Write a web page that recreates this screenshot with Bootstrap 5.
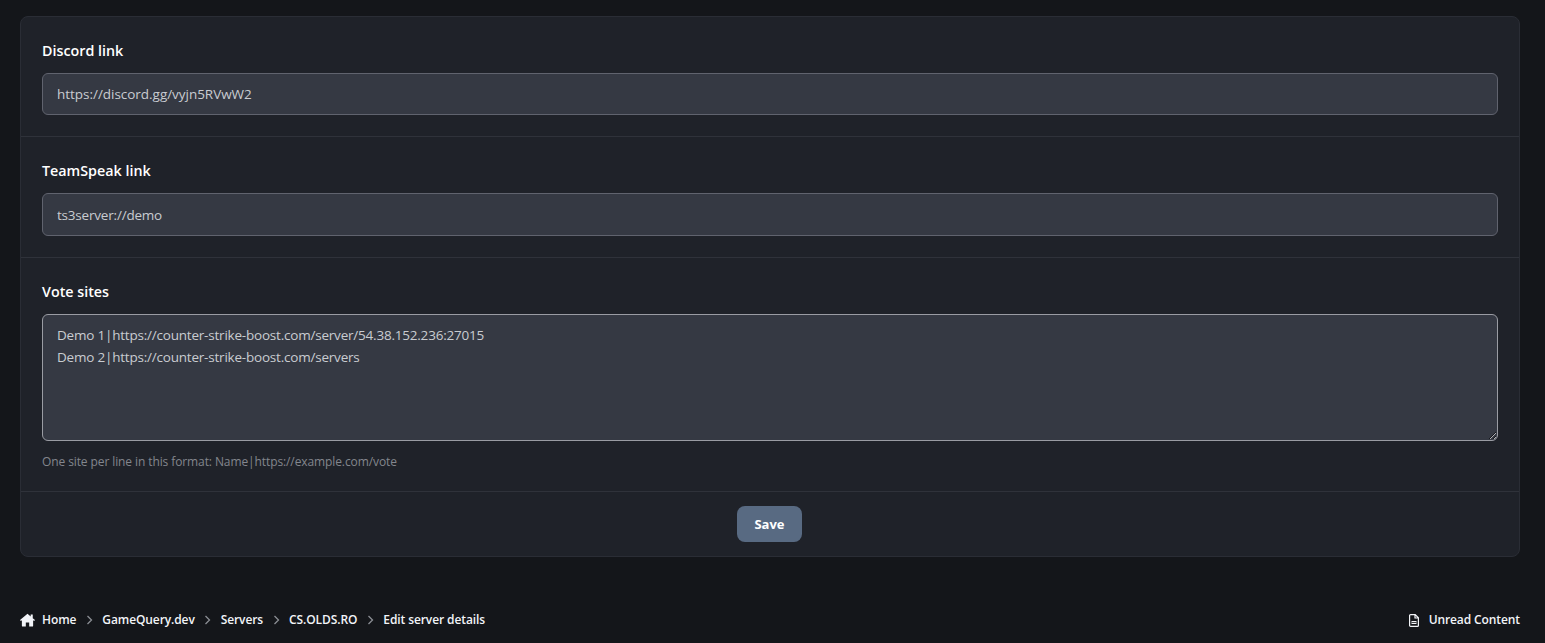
<!DOCTYPE html>
<html lang="en">
<head>
<meta charset="utf-8">
<title>Edit server details</title>
<link href="https://cdn.jsdelivr.net/npm/bootstrap@5.3.0/dist/css/bootstrap.min.css" rel="stylesheet">
<style>
html,body{height:100%}
body{background:#14161a;color:#fff;font-family:"Open Sans","Noto Sans",sans-serif;font-size:13px;overflow:hidden}
.page-wrap{padding:16px 25px 0 20px}
.panel{background:#1f2229;border:1px solid #2a2d35;border-radius:8px}
.field-sec{padding:24px 21px 21px;border-bottom:1px solid #2f323a}
.field-lab{display:block;font-size:14.3px;font-weight:600;line-height:20px;margin-bottom:12px;color:#fff}
.panel .field-in{display:block;width:100%;height:42.4px;background:#353943;border:1px solid #60636e;border-radius:6px;color:#c9ccd1;font-size:13.5px;line-height:22px;padding:9px 14px;box-shadow:none;letter-spacing:-.03px}
.panel .in-short{letter-spacing:-.2px}
.panel textarea.field-in{height:127px;border-color:#9a9ca3;padding:9px 14px;resize:vertical;letter-spacing:-.21px}
.field-hint{font-size:12px;line-height:18px;color:#83868d;margin-top:12px;letter-spacing:-.1px}
.sec-last{padding-bottom:20px}
.panel-foot{padding:14px 1px 14px 0}
.btn.save-btn{background:#586a82;border:0;border-radius:8px;color:#fff;font-size:13px;font-weight:700;height:36px;width:65px;padding:1px 0 0}
.foot-bar{margin-top:53px;height:21px;font-size:12px;font-weight:600;letter-spacing:-.1px}
.crumb-item{color:#f2f4f8;text-decoration:none;white-space:nowrap}
.crumb-sep{width:26px;display:flex;justify-content:center}
.home-ico{margin-right:7px}
.file-ico{margin-right:10px}
</style>
</head>
<body>
<div class="page-wrap">
  <form class="panel">
    <div class="field-sec">
      <label class="field-lab" for="f1">Discord link</label>
      <input id="f1" class="form-control field-in" value="https://discord.gg/vyjn5RVwW2">
    </div>
    <div class="field-sec">
      <label class="field-lab" for="f2">TeamSpeak link</label>
      <input id="f2" class="form-control field-in in-short" value="ts3server://demo">
    </div>
    <div class="field-sec sec-last">
      <label class="field-lab" for="f3">Vote sites</label>
      <textarea id="f3" class="form-control field-in">Demo 1|https://counter-strike-boost.com/server/54.38.152.236:27015
Demo 2|https://counter-strike-boost.com/servers</textarea>
      <div class="field-hint">One site per line in this format: Name|https://example.com/vote</div>
    </div>
    <div class="panel-foot d-flex justify-content-center">
      <button type="button" class="btn save-btn">Save</button>
    </div>
  </form>
  <div class="foot-bar d-flex justify-content-between align-items-center">
    <div class="d-flex align-items-center">
      <svg width="15" height="14" viewBox="0 0 16 14" class="home-ico flex-shrink-0" fill="#f2f4f8"><path d="M8 .3 0 7l.9 1.1L2 7.2V13a1 1 0 0 0 1 1h3.2V9.6h3.6V14H13a1 1 0 0 0 1-1V7.2l1.1.9L16 7l-2.4-2V1.2h-2.2v2z"/></svg>
      <a class="crumb-item" href="#">Home</a>
      <span class="crumb-sep"><svg width="7" height="10" viewBox="0 0 7 10" fill="none" stroke="#8b8e94" stroke-width="1.3"><path d="m1.5 1 4 4-4 4"/></svg></span>
      <a class="crumb-item" href="#">GameQuery.dev</a>
      <span class="crumb-sep"><svg width="7" height="10" viewBox="0 0 7 10" fill="none" stroke="#8b8e94" stroke-width="1.3"><path d="m1.5 1 4 4-4 4"/></svg></span>
      <a class="crumb-item" href="#">Servers</a>
      <span class="crumb-sep"><svg width="7" height="10" viewBox="0 0 7 10" fill="none" stroke="#8b8e94" stroke-width="1.3"><path d="m1.5 1 4 4-4 4"/></svg></span>
      <a class="crumb-item" href="#">CS.OLDS.RO</a>
      <span class="crumb-sep"><svg width="7" height="10" viewBox="0 0 7 10" fill="none" stroke="#8b8e94" stroke-width="1.3"><path d="m1.5 1 4 4-4 4"/></svg></span>
      <a class="crumb-item" href="#">Edit server details</a>
    </div>
    <a class="crumb-item d-flex align-items-center" href="#">
      <svg width="10" height="13" viewBox="0 0 10 13" class="file-ico" fill="none" stroke="#f2f4f8" stroke-width="1.2"><path d="M1.6.6h4.6l3.2 3.2v7.6a1 1 0 0 1-1 1H1.6a1 1 0 0 1-1-1V1.6a1 1 0 0 1 1-1zM6 .8v3.2h3.2"/><path d="M2.5 7h5v3h-5z" fill="#f2f4f8" stroke="none"/><path d="M2.5 8.5h5" stroke="#14161a" stroke-width=".8"/></svg>
      <span>Unread Content</span>
    </a>
  </div>
</div>
<script src="https://cdn.jsdelivr.net/npm/bootstrap@5.3.0/dist/js/bootstrap.bundle.min.js"></script>
</body>
</html>
